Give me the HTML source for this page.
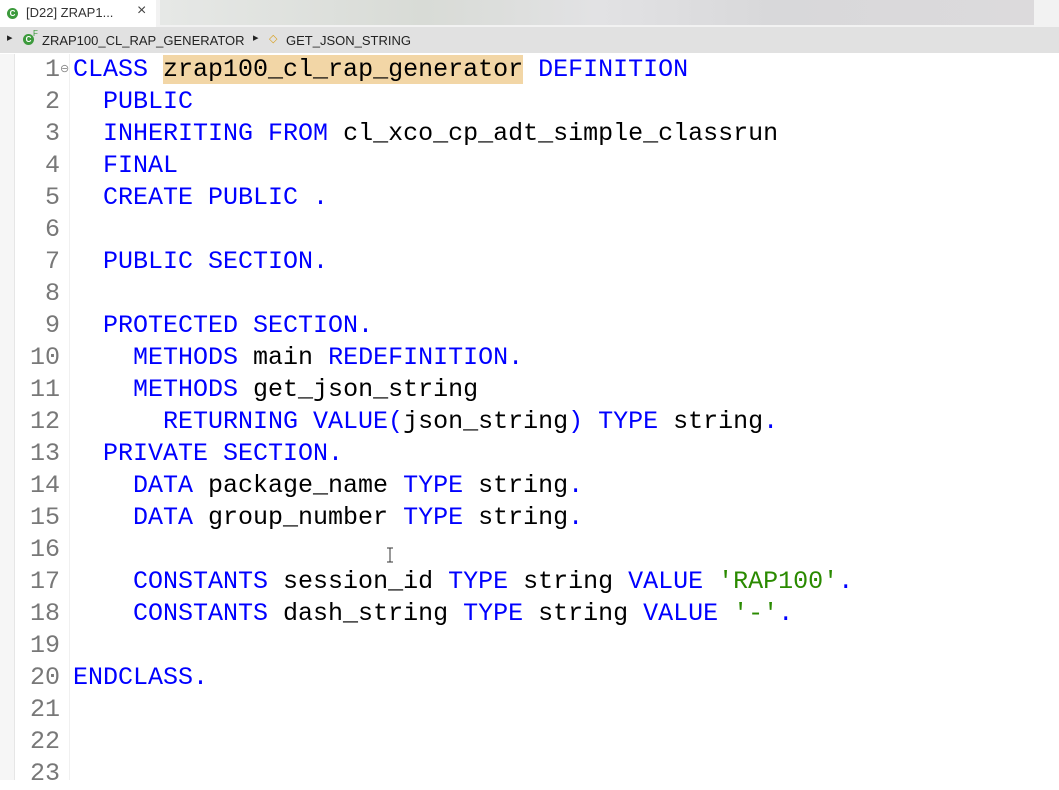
<!DOCTYPE html>
<html><head><meta charset="utf-8"><style>
body{margin:0;width:1059px;height:780px;overflow:hidden;background:#fff;position:relative;font-family:"Liberation Sans",sans-serif}
.tabbar{position:absolute;left:0;top:0;width:1059px;height:27px;background:#f2f2f2}
.tabfill{position:absolute;left:160px;top:0;width:874px;height:25px;background:linear-gradient(90deg,#e6e8e6,#d8dbd6 30%,#e2e2e4 50%,#d8d8da 70%,#dcdadc 100%)}
.tab{position:absolute;left:0;top:0;width:156px;height:27px;background:#fff;font-size:13px;color:#333}
.bc{position:absolute;left:0;top:27px;width:1059px;height:26px;background:#e1e1e1;font-size:13px;color:#222}
.ic{position:absolute;width:11px;height:11px;border-radius:50%;background:#3c9a3c;color:#fff;font-size:8px;font-weight:bold;text-align:center;line-height:11px}
.code{position:absolute;left:0;top:54px;width:1059px;height:726px}
.gl{position:absolute;left:0;top:0;width:14px;height:726px;background:#f6f6f6;border-right:1px solid #e6e6e6}
.gr{position:absolute;left:69px;top:0;width:1px;height:726px;background:#f0f0f0}
.ln{position:absolute;left:0;width:60px;text-align:right;font:25px/32px "Liberation Mono",monospace;color:#787878}
.tx{position:absolute;left:73px;font:25px/32px "Liberation Mono",monospace;color:#000;white-space:pre}
.k{color:#0000ff}.s{color:#2a8a00}.h{background:#f2d6a6}
</style></head><body>
<div class="tabbar"><div class="tabfill"></div>
<div class="tab"><div class="ic" style="left:7px;top:8px">C</div><span style="position:absolute;left:26px;top:5px">[D22] ZRAP1...</span><span style="position:absolute;left:137px;top:2px;font-size:16px;color:#444">×</span></div></div>
<div class="bc"><span style="position:absolute;left:7px;top:4px;font-size:11px">▸</span><div class="ic" style="left:23px;top:7px">C</div><span style="position:absolute;left:33px;top:2px;font-size:8px;color:#3c9a3c">F</span>
<span style="position:absolute;left:42px;top:6px">ZRAP100_CL_RAP_GENERATOR</span><span style="position:absolute;left:253px;top:4px;font-size:11px">▸</span><span style="position:absolute;left:269px;top:5px;font-size:11px;color:#d8a020">◇</span><span style="position:absolute;left:286px;top:6px">GET_JSON_STRING</span></div>
<div class="code"><div class="gl"></div><div class="gr"></div>
<div class="ln" style="top:0">1</div><div class="ln" style="top:32px">2</div><div class="ln" style="top:64px">3</div><div class="ln" style="top:96px">4</div><div class="ln" style="top:128px">5</div><div class="ln" style="top:160px">6</div><div class="ln" style="top:192px">7</div><div class="ln" style="top:224px">8</div><div class="ln" style="top:256px">9</div><div class="ln" style="top:288px">10</div><div class="ln" style="top:320px">11</div><div class="ln" style="top:352px">12</div><div class="ln" style="top:384px">13</div><div class="ln" style="top:416px">14</div><div class="ln" style="top:448px">15</div><div class="ln" style="top:480px">16</div><div class="ln" style="top:512px">17</div><div class="ln" style="top:544px">18</div><div class="ln" style="top:576px">19</div><div class="ln" style="top:608px">20</div><div class="ln" style="top:640px">21</div><div class="ln" style="top:672px">22</div><div class="ln" style="top:704px">23</div>
<span style="position:absolute;left:60px;top:8px;font-size:11px;color:#888">⊖</span>
<div class="tx" style="top:0"><span class="k">CLASS</span> <span class="h">zrap100_cl_rap_generator</span> <span class="k">DEFINITION</span></div>
<div class="tx" style="top:32px">  <span class="k">PUBLIC</span></div>
<div class="tx" style="top:64px">  <span class="k">INHERITING FROM</span> cl_xco_cp_adt_simple_classrun</div>
<div class="tx" style="top:96px">  <span class="k">FINAL</span></div>
<div class="tx" style="top:128px">  <span class="k">CREATE PUBLIC .</span></div>
<div class="tx" style="top:192px">  <span class="k">PUBLIC SECTION.</span></div>
<div class="tx" style="top:256px">  <span class="k">PROTECTED SECTION.</span></div>
<div class="tx" style="top:288px">    <span class="k">METHODS</span> main <span class="k">REDEFINITION.</span></div>
<div class="tx" style="top:320px">    <span class="k">METHODS</span> get_json_string</div>
<div class="tx" style="top:352px">      <span class="k">RETURNING VALUE(</span>json_string<span class="k">) TYPE</span> string<span class="k">.</span></div>
<div class="tx" style="top:384px">  <span class="k">PRIVATE SECTION.</span></div>
<div class="tx" style="top:416px">    <span class="k">DATA</span> package_name <span class="k">TYPE</span> string<span class="k">.</span></div>
<div class="tx" style="top:448px">    <span class="k">DATA</span> group_number <span class="k">TYPE</span> string<span class="k">.</span></div>
<svg style="position:absolute;left:385px;top:493px" width="10" height="16"><path d="M2 1h6M5 1v14M2 15h6" stroke="#333" stroke-width="1" fill="none"/></svg>
<div class="tx" style="top:512px">    <span class="k">CONSTANTS</span> session_id <span class="k">TYPE</span> string <span class="k">VALUE</span> <span class="s">'RAP100'</span><span class="k">.</span></div>
<div class="tx" style="top:544px">    <span class="k">CONSTANTS</span> dash_string <span class="k">TYPE</span> string <span class="k">VALUE</span> <span class="s">'-'</span><span class="k">.</span></div>
<div class="tx" style="top:608px"><span class="k">ENDCLASS.</span></div>
</div>
</body></html>
